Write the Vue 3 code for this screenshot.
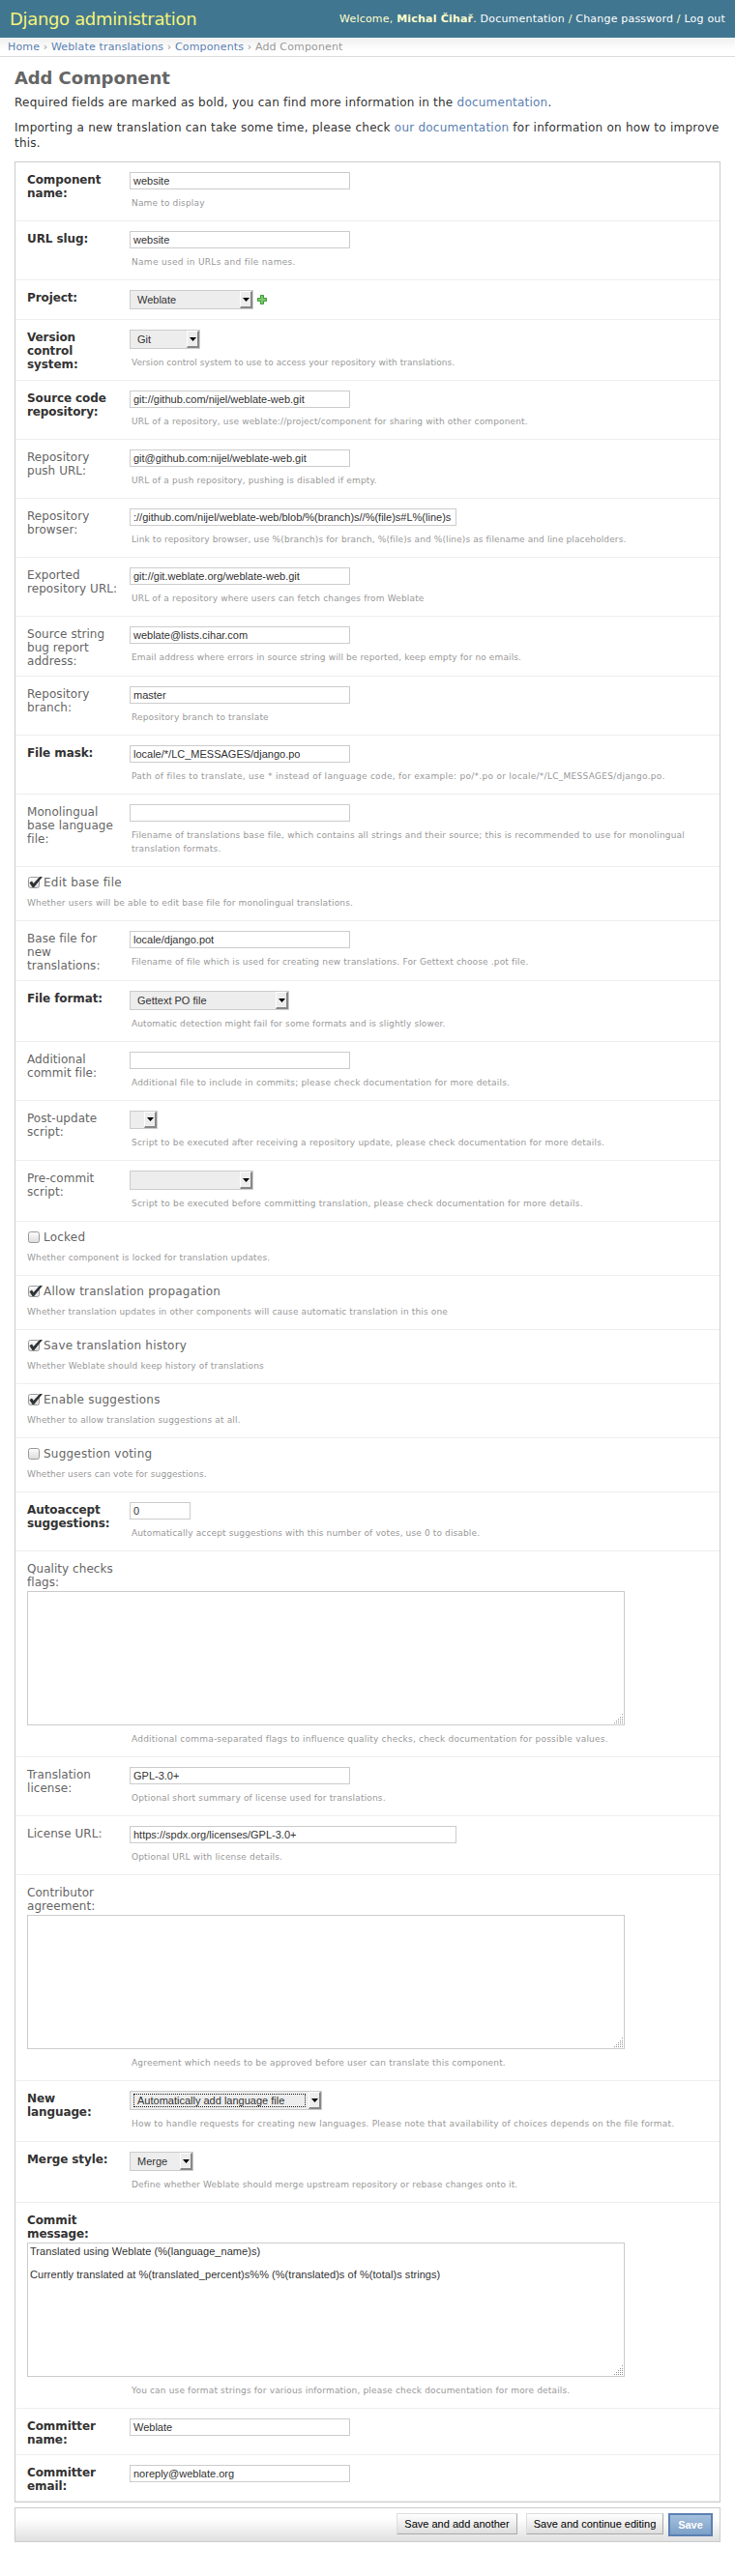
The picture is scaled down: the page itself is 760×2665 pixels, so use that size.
<script setup>
const rows = [
  { t: 'text', h: 61, b: 1, label: 'Component\nname:', v: 'website', help: 'Name to display' },
  { t: 'text', h: 61, b: 1, label: 'URL slug:', v: 'website', ls: 0.3, help: 'Name used in URLs and file names.' },
  { t: 'choice', h: 41, b: 1, label: 'Project:', v: 'Weblate', w: 128, add: true },
  { t: 'choice', h: 63, b: 1, label: 'Version\ncontrol\nsystem:', v: 'Git', w: 73, ls: 0.05, help: 'Version control system to use to access your repository with translations.' },
  { t: 'text', h: 61, b: 1, label: 'Source code\nrepository:', v: 'git://github.com/nijel/weblate-web.git', ls: 0.14, help: 'URL of a repository, use weblate://project/component for sharing with other component.' },
  { t: 'text', h: 61, label: 'Repository\npush URL:', v: 'git@github.com:nijel/weblate-web.git', help: 'URL of a push repository, pushing is disabled if empty.' },
  { t: 'text', h: 61, w: 338, label: 'Repository\nbrowser:', v: '://github.com/nijel/weblate-web/blob/%(branch)s//%(file)s#L%(line)s', ls: 0.11, help: 'Link to repository browser, use %(branch)s for branch, %(file)s and %(line)s as filename and line placeholders.' },
  { t: 'text', h: 61, label: 'Exported\nrepository URL:', v: 'git://git.weblate.org/weblate-web.git', help: 'URL of a repository where users can fetch changes from Weblate' },
  { t: 'text', h: 62, label: 'Source string\nbug report\naddress:', v: 'weblate@lists.cihar.com', ls: 0.12, help: 'Email address where errors in source string will be reported, keep empty for no emails.' },
  { t: 'text', h: 61, label: 'Repository\nbranch:', v: 'master', help: 'Repository branch to translate' },
  { t: 'text', h: 61, b: 1, label: 'File mask:', v: 'locale/*/LC_MESSAGES/django.po', ls: 0.28, help: 'Path of files to translate, use * instead of language code, for example: po/*.po or locale/*/LC_MESSAGES/django.po.' },
  { t: 'text', h: 75, label: 'Monolingual\nbase language\nfile:', v: '', ls: 0.18, help: 'Filename of translations base file, which contains all strings and their source; this is recommended to use for monolingual\ntranslation formats.' },
  { t: 'check', h: 56, on: true, label: 'Edit base file', help: 'Whether users will be able to edit base file for monolingual translations.' },
  { t: 'text', h: 62, label: 'Base file for\nnew\ntranslations:', v: 'locale/django.pot', help: 'Filename of file which is used for creating new translations. For Gettext choose .pot file.' },
  { t: 'choice', h: 63, b: 1, label: 'File format:', v: 'Gettext PO file', w: 165, ls: 0.11, help: 'Automatic detection might fail for some formats and is slightly slower.' },
  { t: 'text', h: 61, label: 'Additional\ncommit file:', v: '', ls: 0.2, help: 'Additional file to include in commits; please check documentation for more details.' },
  { t: 'choice', h: 62, short: true, label: 'Post-update\nscript:', v: '', w: 29, ls: 0.2, help: 'Script to be executed after receiving a repository update, please check documentation for more details.' },
  { t: 'choice', h: 63, label: 'Pre-commit\nscript:', v: '', w: 128, ls: 0.21, help: 'Script to be executed before committing translation, please check documentation for more details.' },
  { t: 'check', h: 56, label: 'Locked', help: 'Whether component is locked for translation updates.' },
  { t: 'check', h: 56, on: true, label: 'Allow translation propagation', ls: 0.14, help: 'Whether translation updates in other components will cause automatic translation in this one' },
  { t: 'check', h: 56, on: true, label: 'Save translation history', help: 'Whether Weblate should keep history of translations' },
  { t: 'check', h: 56, on: true, label: 'Enable suggestions', help: 'Whether to allow translation suggestions at all.' },
  { t: 'check', h: 56, label: 'Suggestion voting', ls: 0.08, help: 'Whether users can vote for suggestions.' },
  { t: 'text', h: 61, b: 1, w: 63, label: 'Autoaccept\nsuggestions:', v: '0', ls: 0.13, help: 'Automatically accept suggestions with this number of votes, use 0 to disable.' },
  { t: 'area', h: 213, label: 'Quality checks\nflags:', v: '', ls: 0.21, help: 'Additional comma-separated flags to influence quality checks, check documentation for possible values.' },
  { t: 'text', h: 61, label: 'Translation\nlicense:', v: 'GPL-3.0+', help: 'Optional short summary of license used for translations.' },
  { t: 'text', h: 61, w: 338, label: 'License URL:', v: 'https://spdx.org/licenses/GPL-3.0+', help: 'Optional URL with license details.' },
  { t: 'area', h: 213, label: 'Contributor\nagreement:', v: '', ls: 0.18, help: 'Agreement which needs to be approved before user can translate this component.' },
  { t: 'choice', h: 63, b: 1, focus: true, label: 'New\nlanguage:', v: 'Automatically add language file', w: 199, ls: 0.2, help: 'How to handle requests for creating new languages. Please note that availability of choices depends on the file format.' },
  { t: 'choice', h: 63, b: 1, label: 'Merge style:', v: 'Merge', w: 66, ls: 0.13, help: 'Define whether Weblate should merge upstream repository or rebase changes onto it.' },
  { t: 'area', h: 213, b: 1, label: 'Commit\nmessage:', v: 'Translated using Weblate (%(language_name)s)\n\nCurrently translated at %(translated_percent)s%% (%(translated)s of %(total)s strings)', help: 'You can use format strings for various information, please check documentation for more details.' },
  { t: 'text', h: 48, b: 1, label: 'Committer\nname:', v: 'Weblate' },
  { t: 'text', h: 48, b: 1, label: 'Committer\nemail:', v: 'noreply@weblate.org' },
]
const spacing = (r) => ({ letterSpacing: (r.ls || 0.16) + 'px' })
</script>

<template>
  <div class="page">
    <header class="header">
      <div class="brand">Django administration</div>
      <div class="tools">Welcome, <b>Michal Čihař</b>. <a>Documentation</a> / <a>Change password</a> / <a>Log out</a></div>
    </header>
    <nav class="crumbs"><a>Home</a> › <a>Weblate translations</a> › <a>Components</a> › Add Component</nav>
    <main class="content">
      <h1>Add Component</h1>
      <p>Required fields are marked as bold, you can find more information in the <a>documentation</a>.</p>
      <p>Importing a new translation can take some time, please check <a>our documentation</a> for information on how to improve<br>this.</p>
      <section class="module">
        <div v-for="r in rows" :key="r.label" class="row" :class="r.t" :style="{ height: r.h + 'px' }">
          <template v-if="r.t === 'check'">
            <div class="checkline">
              <svg class="box" width="17" height="14" viewBox="0 0 17 14">
                <defs>
                  <linearGradient id="boxfill" x1="0" y1="0" x2="0" y2="1">
                    <stop offset="0" stop-color="#fdfdfd" /><stop offset="1" stop-color="#dcdcdc" />
                  </linearGradient>
                </defs>
                <rect x="1.5" y="1.5" width="11" height="11" rx="2" fill="url(#boxfill)" stroke="#9a9a9a" />
                <path v-if="r.on" d="M2.4 7.2L5 5.6L6.6 8L13 1H16L7.2 12H5.6Z" fill="#2e3436" />
              </svg>
              <span>{{ r.label }}</span>
            </div>
            <div class="help" :style="spacing(r)">{{ r.help }}</div>
          </template>
          <template v-else>
            <div class="label" :class="{ required: r.b }">{{ r.label }}</div>
            <div class="field">
              <div v-if="r.t === 'text'" class="input" :style="{ width: (r.w || 228) + 'px' }">{{ r.v }}</div>
              <div v-else-if="r.t === 'area'" class="textarea">{{ r.v }}
                <svg class="grip" width="10" height="10" viewBox="0 0 10 10" fill="#999">
                  <path d="M8 0h1v1h-1zM8 3h1v1h-1zM6 3h1v1h-1zM4 5h1v1h-1zM6 5h1v1h-1zM8 5h1v1h-1zM2 7h1v1h-1zM4 7h1v1h-1zM6 7h1v1h-1zM8 7h1v1h-1zM0 9h1v1h-1zM2 9h1v1h-1zM4 9h1v1h-1zM6 9h1v1h-1zM8 9h1v1h-1z" />
                </svg>
              </div>
              <div v-else class="selectline">
                <div class="select" :class="{ short: r.short, focus: r.focus }" :style="{ width: r.w + 'px' }">
                  <span v-if="r.v" class="value">{{ r.v }}</span>
                  <span class="arrow"><svg width="7" height="4" viewBox="0 0 7 4"><path d="M0 0H7L3.5 4Z" fill="#000" /></svg></span>
                </div>
                <svg v-if="r.add" class="plus" width="10" height="10" viewBox="0 0 10 10">
                  <path d="M3.5 .5H6.5V3.5H9.5V6.5H6.5V9.5H3.5V6.5H.5V3.5H3.5Z" fill="#7cc86a" stroke="#3f9a3c" />
                </svg>
              </div>
              <div v-if="r.help" class="help" :style="spacing(r)">{{ r.help }}</div>
            </div>
          </template>
        </div>
      </section>
      <div class="submit">
        <div class="btn another">Save and add another</div>
        <div class="btn continue">Save and continue editing</div>
        <div class="btn save">Save</div>
      </div>
    </main>
  </div>
</template>

<style>
body { margin: 0; background: #fff; }
</style>

<style scoped>
.page { width: 760px; height: 2665px; box-sizing: border-box; font: 12px/17px "DejaVu Sans", Verdana, sans-serif; color: #333; }
.page * { box-sizing: border-box; }
a { color: #5b80b2; }
.header { height: 39px; background: #417690; color: #ffc; display: flex; justify-content: space-between; padding: 0 10px; }
.brand { font-size: 18px; line-height: 40px; color: #f4f379; white-space: nowrap; letter-spacing: -0.33px; }
.tools { font-size: 11px; line-height: 39px; white-space: nowrap; letter-spacing: 0.2px; }
.tools a { color: #fff; }
.crumbs { height: 20px; border-top: 1px solid #fff; border-bottom: 1px solid #ddd; background: linear-gradient(#f1f1f1, #fff 12px); color: #999; font-size: 11px; line-height: 17px; padding-left: 8px; white-space: nowrap; letter-spacing: 0.15px; }
.content { padding: 0 15px; }
h1 { margin: 11px 0 0; font-size: 18px; line-height: 22px; color: #666; letter-spacing: -0.1px; }
p { margin: 6px 0 10px; line-height: 16px; white-space: nowrap; letter-spacing: 0.23px; }
.module { margin-top: 11px; border: 1px solid #ccc; }
.row { border-bottom: 1px solid #eee; padding: 10px 12px 0; display: flex; }
.row.area, .row.check { display: block; }
.label { width: 106px; padding-top: 1px; line-height: 14px; color: #666; white-space: pre; flex: none; letter-spacing: 0.05px; }
.label.required { color: #333; font-weight: bold; letter-spacing: -0.1px; }
.area .label { height: 31px; }
.input { height: 18px; border: 1px solid #ccc; padding: 0 3px; font: 11px/16px "Liberation Sans", Arial, sans-serif; white-space: pre; overflow: hidden; }
.textarea { position: relative; width: 618px; height: 139px; border: 1px solid #ccc; padding: 2px; font: 11px/12px "Liberation Sans", Arial, sans-serif; letter-spacing: 0.05px; white-space: pre; overflow: hidden; }
.grip { position: absolute; right: 0; bottom: 1px; }
.selectline { display: flex; align-items: center; }
.select { height: 20px; border: 1px solid #ccc; background: #ededed; display: flex; font: 11px/18px "Liberation Sans", Arial, sans-serif; white-space: nowrap; }
.select.short { height: 19px; }
.value { padding-left: 7px; }
.focus .value { width: 178px; margin: 2px 0 2px 3px; padding: 0 0 0 3px; line-height: 13px; border: 1px dotted #222; }
.arrow { margin-left: auto; width: 13px; background: #ededed; border: solid; border-width: 1px 2px 2px 1px; border-color: #fff #888 #888 #fff; display: flex; align-items: center; justify-content: center; }
.arrow svg { flex: none; }
.plus { margin-left: 4px; }
.help { margin-top: 7px; padding-left: 2px; font-size: 9px; line-height: 14px; color: #999; white-space: pre; }
.area .help { padding-left: 108px; }
.checkline { display: flex; height: 14px; color: #666; line-height: 12px; letter-spacing: 0.22px; }
.box { margin-top: -1px; }
.check .help { padding-left: 0; margin-top: 6px; }
.submit { margin-top: 5px; height: 36px; border: 1px solid #ccc; background: linear-gradient(#fff 30%, #e0e0e0); display: flex; justify-content: flex-end; align-items: flex-start; padding: 5px 7px 0 0; font: 11px/20px "Liberation Sans", Arial, sans-serif; color: #000; }
.btn { height: 22px; border: 1px solid; border-color: #ddd #aaa #aaa #ddd; background: linear-gradient(#fff, #ddd); text-align: center; white-space: nowrap; }
.another { width: 125px; margin-right: 9px; }
.continue { width: 142px; margin-right: 5px; }
.save { width: 46px; height: 24px; border: 2px solid #5b80b2; background: linear-gradient(#a5c0df, #7ca0c7); color: #fff; font-weight: bold; }
</style>
